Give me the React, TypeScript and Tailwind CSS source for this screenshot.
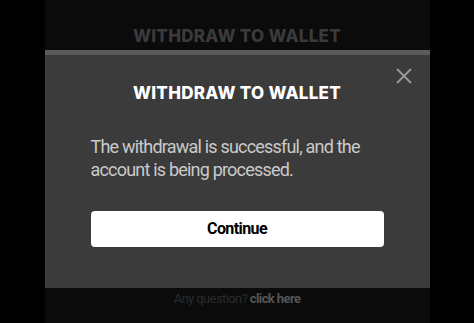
import React from 'react'

const App = () => {
    return (
        <main className="w-full h-[323px] bg-black overflow-hidden" style={{ fontFamily: 'Roboto, "Open Sans", sans-serif' }}>
            <div className="w-[385px] h-full mx-auto bg-[#0b0b0b] flex flex-col">
                <h2 className="pt-[24px] h-[50px] text-center text-[17px] font-extrabold text-[#3a3a3a] tracking-[0.3px]" style={{ fontFamily: 'Inter, sans-serif' }}>
                    WITHDRAW TO WALLET
                </h2>
                <div className="relative h-[238px] bg-[#3b3b3b] border-t-[5px] border-[#5b5b5b] flex flex-col px-[46px]">
                    <button className="absolute right-[18px] top-[13px] text-[#9a9a9a]">
                        <svg width="16" height="16" viewBox="0 0 16 16" fill="none" stroke="currentColor" strokeWidth="1.8">
                            <path d="M1 1L15 15M15 1L1 15" />
                        </svg>
                    </button>
                    <h1 className="mt-[26px] text-center text-white text-[17px] font-extrabold tracking-[0.3px]" style={{ fontFamily: 'Inter, sans-serif' }}>
                        WITHDRAW TO WALLET
                    </h1>
                    <p className="mt-[28px] text-[18px] leading-[23px] text-[#cacaca] tracking-[-0.8px]">
                        The withdrawal is successful, and the account is being processed.
                    </p>
                    <button className="mt-[30px] h-[36px] w-full bg-white rounded-[4px] text-black text-[16px] font-bold tracking-[-0.6px]">
                        Continue
                    </button>
                </div>
                <p className="pt-[1px] text-center text-[13px] text-[#2b2b2b] tracking-[-0.6px]">
                    Any question? <span className="text-[#555] font-bold">click here</span>
                </p>
            </div>
        </main>
    )
}

export default App
